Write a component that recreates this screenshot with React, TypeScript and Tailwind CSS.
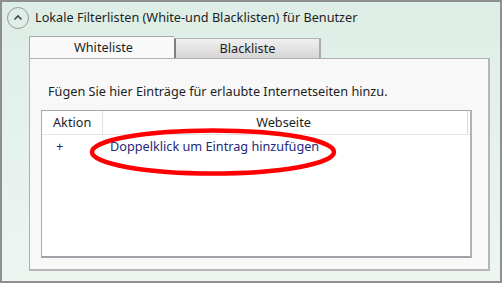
import React from 'react'

const font = { fontFamily: '"Noto Sans", "Open Sans", sans-serif' }

function CollapseIcon() {
  return (
    <svg width="24" height="24" viewBox="0 0 24 24" className="shrink-0">
      <circle cx="12" cy="12" r="10.5" fill="none" stroke="#9a9a9a" strokeWidth="1" />
      <path d="M8.5 13.5 L12 10 L15.5 13.5" fill="none" stroke="#444" strokeWidth="1.6" />
    </svg>
  )
}

export default function App() {
  return (
    <div
      className="relative w-[502px] h-[283px] border-2 border-[#8e8e8e] bg-gradient-to-b from-[#ddeee6] to-[#eef5f1] text-[12.7px] text-[#1e1e1e] overflow-hidden"
      style={font}
    >
      {/* header */}
      <div className="flex items-center h-[31px] pl-[4px] gap-[5px]">
        <CollapseIcon />
        <span className="leading-none">Lokale Filterlisten (White-und Blacklisten) für Benutzer</span>
      </div>

      {/* tabs */}
      <div className="ml-[27px] mt-[3px] flex items-end h-[22px]">
        <div className="w-[145px] h-[22px] bg-[#f9f9f9] border-l border-t border-[#a8a8a8] flex items-center justify-center pl-[3px]">
          Whiteliste
        </div>
        <div className="w-[147px] h-[20px] bg-gradient-to-b from-[#f0f0f0] to-[#d6d6d6] border-l-2 border-l-[#7c7c84] border-t border-t-[#b4b4b4] border-r-2 border-r-[#a8a8ae] flex items-center justify-center pt-[1px]">
          Blackliste
        </div>
      </div>

      {/* panel */}
      <div className="ml-[27px] w-[461px] h-[213px] bg-[#f8f8f8] border-l border-t border-[#b0b0b0] border-r-2 border-b-2 border-r-[#b4b6bc] border-b-[#b4b6bc] pl-[11px] pt-[26px]">
        <div className="pl-[7px] leading-none">Fügen Sie hier Einträge für erlaubte Internetseiten hinzu.</div>

        <div className="mt-[12px] w-[431px] h-[148px] bg-white border border-[#a8a8a8] border-b-2 border-r-2 border-b-[#a0a2a8] border-r-[#b0b2b8]">
          <div className="flex h-[24px] border-b border-[#e4e4e4]">
            <div className="w-[61px] pl-[11px] flex items-center border-r border-[#e0e0e0]">Aktion</div>
            <div className="w-[365px] flex items-center justify-center pr-[3px] border-r border-[#d8d8d8]">Webseite</div>
          </div>
          <div className="flex h-[24px] items-center text-[#25287a]">
            <div className="w-[61px] pl-[14px]">+</div>
            <div className="pl-[7px]">Doppelklick um Eintrag hinzufügen</div>
          </div>
        </div>
      </div>

      {/* red annotation */}
      <svg className="absolute left-[84px] top-[126px]" width="256" height="52" viewBox="0 0 256 52">
        <ellipse cx="127" cy="24" rx="121" ry="21.5" fill="none" stroke="#ff0000" strokeWidth="4.5" />
      </svg>
    </div>
  )
}
